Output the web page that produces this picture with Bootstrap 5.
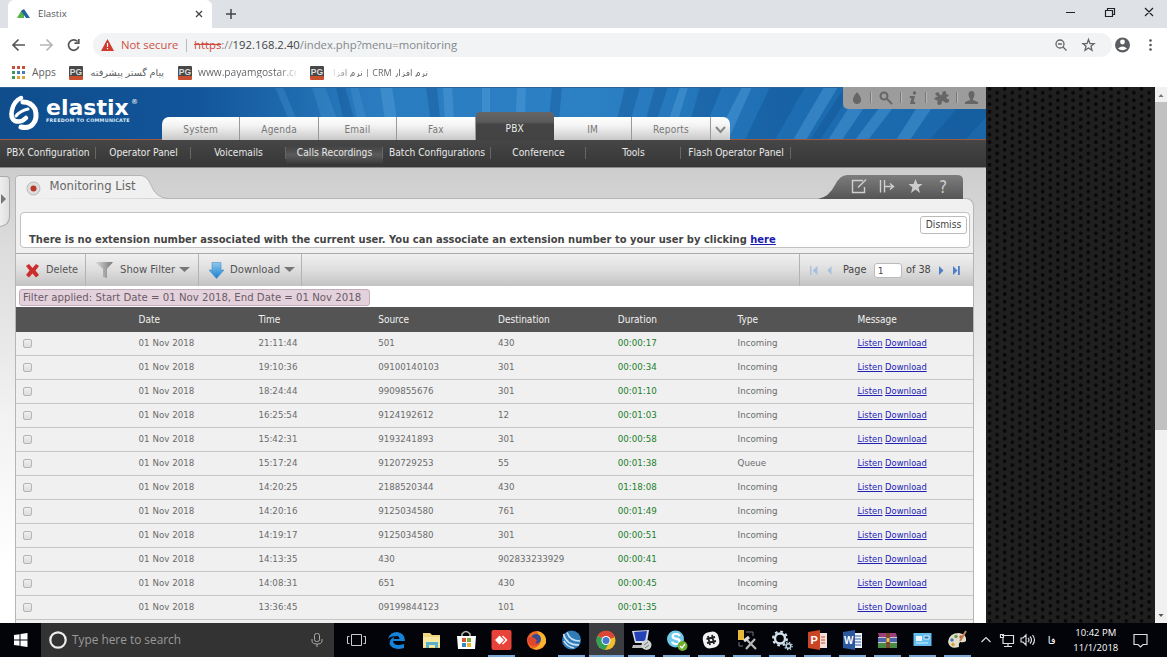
<!DOCTYPE html>
<html lang="en">
<head>
<meta charset="utf-8">
<title>Elastix</title>
<link href="https://cdn.jsdelivr.net/npm/bootstrap@5.3.0/dist/css/bootstrap.min.css" rel="stylesheet">
<style>
:root{--ui:"Open Sans","Noto Sans","DejaVu Sans",sans-serif;--app:"DejaVu Sans Condensed","DejaVu Sans",sans-serif;--wide:"DejaVu Sans",sans-serif}
html,body{height:100%;overflow:hidden}
body{font-family:var(--ui);font-size:11px;line-height:1;color:#444;background:#fff;white-space:nowrap}
svg{display:block;flex:none}
.desk{width:1167px;height:657px}
.tabstrip{height:28px;background:#dee1e6}
.btab{width:204px;margin-left:8px;background:#fff;border-radius:6px 6px 0 0;padding-left:9px;font-size:9.700px;color:#555}
.plus{margin-left:13px;margin-top:8px}
.toolbar{height:34px}
.omni{width:1019px;height:24px;border-radius:12px;background:#f1f3f4;font-size:11.320px;color:#85888c;padding-left:8px;margin-left:11px}
.insecure{color:#d05045;margin-left:7px;width:58px}
.bar{width:1px;height:13px;background:#bbb;margin:0 7px}
.marks{height:25px;font-size:10.200px;color:#5c5f63}
.pg{width:14px;height:14px;background:linear-gradient(#484848 72%,#c8502f 72%);color:#ddd;font:bold 8.5px/13px "Liberation Sans",sans-serif;text-align:center;border-radius:1px;flex:none}
.fade-r,.fade-l{-webkit-background-clip:text;background-clip:text;color:transparent}
.fade-r{width:98px;background-image:linear-gradient(90deg,#5c5f63 82%,#ddd)}
.fade-l{width:95px;background-image:linear-gradient(270deg,#5c5f63 78%,#ddd);font-size:9px}
.view{height:536px}
.page{width:986px;background:linear-gradient(#cdcdcd 80px,#dcdcdc 160px,#f2f2f2 330px,#fff 480px);font-family:var(--app)}
.hero{height:53px;background:#0f4f8f}
.hero-art{left:0;top:0}
.brandmark{left:6px;top:6px}
.brandname{left:46px;top:10px;color:#fff;font:bold 22px/22px "DejaVu Sans",sans-serif}
.brandtag{left:46px;top:31px;color:#dce9f7;font:bold 4.8px/6px "DejaVu Sans",sans-serif;letter-spacing:.3px}
.reg{left:131px;top:12px;color:#fff;font:7px/7px "DejaVu Sans",sans-serif}
.quick{right:0;top:0;width:143px;height:21.500px;background:#9c9c9c;border-radius:0 0 0 5px;padding:0 7px 0 8px}
.quick i{width:1px;height:11px;background:#777;box-shadow:1px 0 #b5b5b5}
.tabs{left:162px;bottom:0;height:28px}
.tabs>div{width:78.400px;height:23px;background:linear-gradient(#fff,#f2f2f2 40%,#c9c9c9);border-right:1px solid #999;color:#777;font-size:10px;line-height:25px;text-align:center;letter-spacing:.2px}
.tabs>.on{height:28px;background:linear-gradient(#666,#5a5a5a 35%,#444 45%,#434343);color:#eee;line-height:33px;border:0;border-radius:4px 4px 0 0}
.sub{height:28px;background:linear-gradient(#464646,#363636);border-bottom:1px solid #8a8a8a;color:#e8e8e8;font-size:10.200px;font-weight:500}
.sub>div{height:27px;line-height:25px;text-align:center;position:relative}
.sub>div::after{content:"";position:absolute;right:0;top:7px;width:1px;height:12px;background:#666}
.sub .hot{background:linear-gradient(transparent 20%,#5a5a5a 55%,transparent 90%)}
.handle{width:10px;height:51px;margin-top:8px;background:linear-gradient(90deg,#eee,#dedede);border:1px solid #aaa;border-left:0;border-radius:0 4px 10px 0;padding-top:17px}
.panel{width:958px;margin-left:5px;height:448px}
.ptop{height:31px}
.ptitle{left:34.500px;top:10px;font-size:12.900px;color:#666;line-height:16px}
.pbody{background:#f0f0f0;border-left:1px solid #b5b5b5;border-right:1px solid #b5b5b5;border-top:1px solid #b5b5b5;border-radius:0 8px 0 0;width:959px;height:425px;margin-top:-1px}
.notice{height:36px;margin:13px 3px 0 4px;background:#fff;border:1px solid #c2c2c2;border-radius:4px}
.notice b{left:8px;top:21px;font:bold 9.960px/12px "DejaVu Sans",sans-serif;color:#444}
.notice a{color:#1a1ab0}
.dis{right:2px;top:3px;width:47px;height:18px;border:1px solid #bbb;border-radius:3px;background:#fff;font-size:10.200px;line-height:16px;text-align:center;color:#444}
.acts{height:33px;margin-top:5px;background:linear-gradient(#f0f0f0,#dedede 50%,#c3c3c3);border-top:1px solid #aaa;font-size:11.200px;color:#555}
.acts .cellx{height:32px;border-right:1px solid #b3b3b3}
.pager{width:174px;border-left:1px solid #b3b3b3;font-size:10.800px;color:#444}
.pager span.box{width:28px;height:15px;background:#fff;border:1px solid #bbb;border-radius:3px;line-height:14px;padding-left:3px;font-size:9.500px}
.fline{height:21px;background:#fff}
.chip{margin-left:3px;margin-top:3px;height:17px;width:351px;border:1px solid #c3abb9;border-radius:3px;background:#e3d2dc;font-size:11.300px;line-height:15px;padding-left:3px;color:#6b5b66}
.grid>div{height:24px;border-bottom:1px solid #c6c6c6;font:8.700px/23px var(--wide);color:#6c6c6c}
.grid>div>span{flex:0 0 119.800px;position:relative;padding-left:2.800px}
.grid>div>span:first-child{padding-left:6.800px}
.grid>.head{height:25px;background:#545454;color:#f2f2f2;font:500 10px/25px var(--app);border:0}
.grid .dur{color:#1b7f2c}
.grid span.get{font:9.300px/21px var(--app);height:23px}
.grid a{color:#2222b4}
.cb{display:block;width:9px;height:9px;border:1px solid #b5b5b5;border-radius:2px;background:linear-gradient(#eee,#ddd)}
.mesh{width:169px}
.sbar{width:12px;background:#f1f1f1}
.thumb{height:328px;background:#c1c1c1}
.task{height:34px;background:#02040a;color:#fff}
.find{width:293px;background:#333;color:#9a9a9a;font-size:11.850px}
.tk{width:35.060px;height:34px;position:relative}
.run::after{content:"";position:absolute;left:4px;right:4px;bottom:0;height:2px;background:#7aa7d3}
.cur{background:#3c3d40}.cur::after{left:0;right:0}
.lang{margin-left:9px;width:18px;font-size:10px}
.clock{font-size:9.500px;line-height:15px;text-align:center;width:60px}
</style>
</head>
<body>
<div class="desk d-flex flex-column">
  <div class="tabstrip d-flex">
    <div class="btab d-flex align-items-center">
      <svg width="13" height="10"><path d="M0 9 4 2 7 1 7 9z" fill="#57b44a"/><path d="M4 2 7 0 13 9H9z" fill="#25639c"/></svg>
      <span class="ms-2">Elastix</span>
      <svg class="ms-auto me-2" width="10" height="10" stroke="#444" stroke-width="1.3"><path d="M2 2 8 8M8 2 2 8"/></svg>
    </div>
    <svg class="plus" width="12" height="12" stroke="#444" stroke-width="1.5"><path d="M6 1V11M1 6H11"/></svg>
    <svg class="ms-auto" width="110" height="28" fill="none" stroke="#222" stroke-width="1.200"><path d="M9 12.500H18M48.500 10.500H55.500V16.500H48.500zM50.500 10V8.500H57.500V14.500H56M88 8 96 16M96 8 88 16"/></svg>
  </div>
  <div class="toolbar d-flex align-items-center">
    <svg width="82" height="34" fill="none" stroke-width="1.700"><path stroke="#555" d="M13 17H25M18.500 11.500 13 17 18.500 22.500M77.500 13.500A5.200 5.200 0 1 0 78.700 18.500M78.800 11V15.200H74.500"/><path stroke="#b5b5b5" d="M40 17H52M46.500 11.500 52 17 46.500 22.500"/></svg>
    <div class="omni d-flex align-items-center">
      <svg width="13" height="12"><path d="M6.500 0 13 12H0z" fill="#cf3a2c"/><path d="M6.500 4V8M6.500 9V10.300" stroke="#fff" stroke-width="1.200"/></svg>
      <span class="insecure">Not secure</span>
      <span class="bar"></span>
      <span class="url"><s style="color:#cf4a3e">https</s>://<span style="color:#444">192.168.2.40</span>/index.php?menu=monitoring</span>
      <svg class="ms-auto" width="63" height="24" fill="none" stroke="#666" stroke-width="1.300"><circle cx="11" cy="11" r="4"/><path d="M14 14 17.500 17.500M9 11H13M39.500 6.500 41 10.600 45 10.700 42 13.200 43 17.300 39.500 15 36 17.300 37 13.200 34 10.700 38 10.600z"/></svg>
    </div>
    <svg width="50" height="34"><circle cx="10.500" cy="17" r="7.500" fill="#5a5d61"/><circle cx="10.500" cy="14" r="2.400" fill="#fff"/><path d="M6 20.500Q10.500 16.500 15 20.500 10.500 24 6 20.500" fill="#fff"/><g fill="#555"><circle cx="38.500" cy="12.500" r="1.300"/><circle cx="38.500" cy="17" r="1.300"/><circle cx="38.500" cy="21.500" r="1.300"/></g></svg>
  </div>
  <div class="marks d-flex align-items-center pb-1">
    <svg style="margin-left:12px" width="13" height="13"><g fill="#c9503c"><path d="M0 0h3v3H0zM5 0h3v3H5zM10 0h3v3h-3z"/></g><path d="M0 5h3v3H0zM0 10h3v3H0z" fill="#3f9a58"/><path d="M5 5h3v3H5zM10 5h3v3h-3z" fill="#497bb5"/><path d="M5 10h3v3H5zM10 10h3v3h-3z" fill="#e0a13a"/></svg>
    <span style="margin-left:7px;width:37px">Apps</span>
    <span class="pg">PG</span><span lang="fa" dir="rtl" style="width:89px;padding-right:14px;margin-left:6px;font-size:9.700px">پیام گستر پیشرفته</span>
    <span class="pg">PG</span><span class="fade-r" style="margin-left:6px">www.payamgostar.co</span>
    <span class="pg" style="margin-left:14px">PG</span><span class="fade-l" dir="rtl" lang="fa" style="margin-left:9px">نرم افزار CRM | نرم افزا</span>
  </div>
  <div class="view d-flex">
    <div class="page">
      <header class="hero position-relative">
        <svg class="hero-art position-absolute" width="986" height="53">
          <defs><linearGradient id="sky"><stop offset="0" stop-color="#0f4d8c"/><stop offset=".2" stop-color="#12559a"/><stop offset=".38" stop-color="#2a7cc0"/><stop offset=".6" stop-color="#2c80c4"/><stop offset=".8" stop-color="#1d6db2"/><stop offset="1" stop-color="#1a67aa"/></linearGradient></defs>
          <path fill="url(#sky)" d="M0 0H986V53H0z"/>
          <g fill="#5aa6e0" opacity=".38"><path opacity=".6" d="M275 0H283L305 53H297zM312 0H325L345 53H328zM350 0H358L372 53H362z"/><path d="M380 0H392L400 53H388zM443 0H452L455 53H446zM482 0H490V53H482zM517 0H526L524 53H515z"/><path d="M680 0H688L672 53H662zM742 0H752L728 53H715zM824 0H838L806 53H793zM862 0H878L842 53H828zM895 0H909L868 53H855zM930 0H946L910 53H896z"/></g>
          <g fill="#0c4c8a" opacity=".32"><path d="M336 0H345L360 53H348zM426 0H437L442 53H433zM552 0H562L557 53H547zM625 0H640L625 53H612zM655 0H668L650 53H640zM700 0H722L700 53H685zM770 0H805L775 53H745zM845 0H855L820 53H810zM975 0H986V30L965 53H930z"/></g>
          <path d="M0 52.500H986" stroke="#a05a42" stroke-width="1"/><path d="M0 .5H986" stroke="#2e6494"/>
        </svg>
        <svg class="brandmark position-absolute" width="36" height="42" fill="none" stroke="#fff" stroke-linecap="round"><path stroke-width="5" d="M17 9Q25 9 29 16 32 25 27 31 23 36 15 34"/><path stroke-width="4.500" d="M15 5Q8 8 6 17 4 25 9 28 15 30 20 25"/><path stroke-width="3" d="M10 23Q14 18 22 16"/></svg>
        <span class="brandname position-absolute">elastix</span><span class="reg position-absolute">®</span>
        <span class="brandtag position-absolute">FREEDOM TO COMMUNICATE</span>
        <div class="quick position-absolute d-flex align-items-center justify-content-between">
          <svg width="12" height="14" fill="#666"><path d="M6 1Q11 7 10 10 9 13 6 13 3 13 2 10 1 7 6 1"/></svg><i></i>
          <svg width="14" height="14" fill="none" stroke="#666" stroke-width="2"><circle cx="5" cy="5" r="3.500"/><path d="M8 8 13 13"/></svg><i></i>
          <svg width="10" height="14" fill="#666"><circle cx="6.500" cy="2" r="1.700"/><path d="M2 5H7L5.500 11H7.500L7 13H2L3.500 7H1.500z"/></svg><i></i>
          <svg width="15" height="14" fill="#666"><path d="M1 3Q3 0 5 2L6 4 8 4Q8 0 11 0 13 1 12 3L15 4 12 7Q14 9 15 8 16 12 12 12L9 10 8 10Q8 14 5 14 2 13 4 10L0 8 2 6 4 6z"/></svg><i></i>
          <svg width="15" height="14" fill="#666"><path d="M7.500 0Q10.500 0 10.500 3.500 10.500 6 9 7.500V9L14 11V13H1V11L6 9V7.500Q4.500 6 4.500 3.500 4.500 0 7.500 0"/></svg>
        </div>
        <nav class="tabs position-absolute d-flex align-items-end">
          <div style="border-radius:7px 0 0 0">System</div><div>Agenda</div><div>Email</div><div>Fax</div><div class="on">PBX</div><div>IM</div><div>Reports</div>
          <div style="width:19px;border:0;border-radius:0 7px 0 0"><svg width="19" height="23" fill="none" stroke="#888" stroke-width="2"><path d="M5 10 9.500 15 14 10"/></svg></div>
        </nav>
      </header>
      <nav class="sub d-flex">
        <div style="width:96px">PBX Configuration</div><div style="width:95px">Operator Panel</div><div style="width:95px">Voicemails</div><div class="hot" style="width:97px">Calls Recordings</div><div style="width:108px">Batch Configurations</div><div style="width:95px">Conference</div><div style="width:95px">Tools</div><div style="width:110px">Flash Operator Panel</div>
      </nav>
      <main class="d-flex">
        <div class="handle"><svg width="8" height="10" fill="#777"><path d="M1 0 6 5 1 10z"/></svg></div>
        <section class="panel">
          <div class="ptop position-relative">
            <svg width="959" height="31"><defs><linearGradient id="dk" x2="0" y2="1"><stop stop-color="#7d7d7d"/><stop offset="1" stop-color="#555"/></linearGradient></defs><path d="M.5 31V11Q.5 7.500 5 7.500H126Q132 8 136 17 141 30.500 154 30.500" fill="#f0f0f0" stroke="#b5b5b5"/><path d="M803 31Q814 29 820 17 825 7 832 7H942Q948 7 948 12V31z" fill="url(#dk)"/>
            <g fill="none" stroke="#cfcfcf" stroke-width="1.400"><path d="M848 12.500H837.500V24.500H849.500V19M843 19.500 851 11.500M865.500 12V24.500M869.500 12V24.500M870 18.500H878M875 15.500 878.500 18.500 875 21.500"/></g><path d="M900.500 11 902.500 16H907.500L903.500 19.500 905 25 900.500 21.500 896 25 897.500 19.500 893.500 16H898.500z" fill="#ccc"/><text x="924" y="24.500" font-size="17" fill="#ccc" font-family="DejaVu Sans Condensed">?</text>
            <circle cx="18.500" cy="20.500" r="6.500" fill="#ddd" stroke="#bbb"/><circle cx="18.500" cy="20.500" r="3" fill="#b8382a"/></svg>
            <span class="ptitle position-absolute">Monitoring List</span>
          </div>
          <div class="pbody">
            <div class="notice position-relative"><b class="position-absolute">There is no extension number associated with the current user. You can associate an extension number to your user by clicking <a href="#">here</a></b><span class="dis position-absolute">Dismiss</span></div>
            <div class="acts d-flex align-items-center">
              <div class="cellx d-flex align-items-center" style="width:70px;padding-left:9px"><svg width="15" height="15"><path d="M1 3 4 1 7.500 5 11 1 14 3 10.500 7.500 14 12 11 14.500 7.500 10.500 4 14.500 1 12 4.500 7.500z" fill="#cc2e2e"/></svg><span style="margin-left:6px;font-size:10.800px">Delete</span></div>
              <div class="cellx d-flex align-items-center" style="width:113px;padding-left:9px"><svg width="19" height="18"><defs><linearGradient id="fu"><stop stop-color="#ddd"/><stop offset="1" stop-color="#777"/></linearGradient></defs><path d="M0 1H18L12 8V17L8 16V8z" fill="url(#fu)"/></svg><span style="margin-left:6px">Show Filter</span><svg class="ms-1" width="11" height="6" fill="#777"><path d="M0 0H11L5.500 5z"/></svg></div>
              <div class="cellx d-flex align-items-center" style="width:103px;padding-left:10px"><svg width="15" height="17"><defs><linearGradient id="dn" x2="0" y2="1"><stop stop-color="#8fc8ee"/><stop offset="1" stop-color="#147fd0"/></linearGradient></defs><path d="M3 .5H12V8H15L7.500 16.500 0 8H3z" fill="url(#dn)" stroke="#4a90c4" stroke-width=".6"/></svg><span style="margin-left:6px">Download</span><svg class="ms-1" width="11" height="6" fill="#777"><path d="M0 0H11L5.500 5z"/></svg></div>
              <div class="pager d-flex align-items-center h-100 ms-auto"><svg width="43" height="12" fill="#a9bfe0"><path d="M10 2h1.500v9H10zM17.500 2V11L12.500 6.500zM31.500 2V11L27.500 6.500z"/></svg><span style="width:31px">Page</span><span class="box">1</span><span style="margin-left:4px;width:30px">of 38</span><svg width="26" height="12" fill="#4d80c9"><path d="M3 2 7.500 6.500 3 11zM17 2 21.500 6.500 17 11zM22 2H23.800V11H22z"/></svg></div>
            </div>
            <div class="fline d-flex"><div class="chip">Filter applied: Start Date = 01 Nov 2018, End Date = 01 Nov 2018</div></div>
            <div class="grid" id="grid"><div class="head d-flex"><span></span><span>Date</span><span>Time</span><span>Source</span><span>Destination</span><span>Duration</span><span>Type</span><span>Message</span></div></div>
          </div>
        </section>
      </main>
    </div>
    <svg class="mesh" width="169" height="536"><defs><pattern id="holes" width="15.200" height="7.600" patternUnits="userSpaceOnUse"><path fill="#1f1f1f" d="M0 0h16v8H0z"/><g fill="#070707"><circle cx="3.500" cy="2" r="1.900"/><circle cx="11.100" cy="5.600" r="1.900"/></g></pattern></defs><path fill="url(#holes)" d="M0 0H169V536H0z"/></svg>
    <div class="sbar d-flex flex-column"><svg width="12" height="15"><path d="M3.500 10 6 7 8.500 10z" fill="#777"/></svg><div class="thumb"></div><svg class="mt-auto" width="12" height="15"><path d="M3.500 6 6 9 8.500 6z" fill="#555"/></svg></div>
  </div>
  <footer class="task d-flex align-items-center">
    <svg width="41" height="34" fill="#fff"><path d="M14 12 19.500 11.200V16.500H14zM20.500 11 27.500 10V16.500H20.500zM14 17.500H19.500V22.800L14 22zM20.500 17.500H27.500V24L20.500 23z"/></svg>
    <div class="find h-100 d-flex align-items-center"><svg width="31" height="34"><circle cx="17" cy="17" r="7.700" fill="none" stroke="#eee" stroke-width="2.200"/></svg><span>Type here to search</span><svg class="ms-auto me-2" width="18" height="34" fill="none" stroke="#aaa"><rect x="6.500" y="10.500" width="5" height="8" rx="2"/><path d="M4 16V18Q4 21 9 21 14 21 14 18V16M9 21V24"/></svg></div>
    <svg width="45" height="34" fill="none" stroke="#ccc"><path d="M17.500 11.500H27.500V22.500H17.500zM15.500 13.500H13.500V20.500H15.500M29.500 13.500H31.500V20.500H29.500"/></svg>
    <div class="tk"><svg width="35" height="34"><path d="M9 16Q11 9 18 9 26 10 26 18H14Q15 24 25 21V25Q14 28 10.500 21 10 15 18 13 11 13 9 16M14.500 16H20.500Q20 13 18 13 15 13 14.500 16" fill="#1683d8" fill-rule="evenodd"/></svg></div>
    <div class="tk"><svg width="35" height="34"><path d="M9 10H16L18 12H26V25H9z" fill="#efd77e"/><path d="M9 14H26V24H9z" fill="#f8e79e"/><path d="M12 25V19H24V25H21V22H15V25z" fill="#58b2c9"/></svg></div>
    <div class="tk"><svg width="35" height="34"><path d="M13 13V11Q17 6 21 11V13" fill="none" stroke="#bbb" stroke-width="1.500"/><path d="M8 13H27L26 26H9z" fill="#fff"/><path fill="#db5131" d="M13 15h4v4h-4z"/><path fill="#76a83a" d="M18 15h4v4h-4z"/><path fill="#318ac6" d="M13 20h4v4h-4z"/><path fill="#edb52e" d="M18 20h4v4h-4z"/></svg></div>
    <div class="tk run"><svg width="35" height="34"><rect x="7.500" y="7" width="20" height="20" rx="2" fill="#e84338"/><path d="M15.500 12.500 20 17 15.500 21.500 11 17zM19 12.500 23.500 17 19 21.500 18 20.500 21.500 17 18 13.500z" fill="#fff"/></svg></div>
    <div class="tk"><svg width="35" height="34"><circle cx="17.500" cy="17.500" r="9.500" fill="#ef6826"/><path d="M18 8Q28 10 27 20 22 28 14 26 24 22 21 14z" fill="#f9b62c"/><circle cx="17" cy="16" r="5" fill="#354b94"/><path d="M8 15Q15 12 18 18 14 21 21 21 15 25 10 21z" fill="#e2472e"/></svg></div>
    <div class="tk run"><svg width="35" height="34"><circle cx="17.500" cy="17" r="9.500" fill="#317cb8"/><path d="M9.500 11Q12 22 25 22M13 9.500Q16 18 26 18M10 18Q13 24 20 25" fill="none" stroke="#c8e1f3" stroke-width="1.600"/></svg></div>
    <div class="tk run cur"><svg width="35" height="34"><circle cx="17" cy="17.500" r="9.500" fill="#f2bd2b"/><path d="M17 17.500 8.800 12.700A9.500 9.500 0 0 1 26 14z" fill="#dc4636"/><path d="M17 17.500 8.800 12.700A9.500 9.500 0 0 0 16 27L20 20z" fill="#32a056"/><circle cx="17" cy="17.500" r="4.500" fill="#fff"/><circle cx="17" cy="17.500" r="3.500" fill="#4479cf"/></svg></div>
    <div class="tk run"><svg width="35" height="34"><path d="M8 8 25 7 23 20 11 20z" fill="#d5dbea"/><path d="M10 9 23 8 21 18 12 18z" fill="#2543b8"/><path d="M9 22H20L19 25H8z" fill="#bbb"/><circle cx="22.500" cy="22" r="5" fill="#cfd5d0"/><path d="M20 22 24 19M21 25 25 22" stroke="#777"/></svg></div>
    <div class="tk run"><svg width="35" height="34"><circle cx="16.500" cy="16" r="8.500" fill="#6fc9e8"/><text x="11.500" y="22" font-size="16" font-weight="bold" fill="#fff" font-family="Liberation Sans">S</text><circle cx="23.500" cy="23" r="5" fill="#6fae30"/><path d="M21 23 23 25 26 21" stroke="#fff" fill="none" stroke-width="1.300"/></svg></div>
    <div class="tk run"><svg width="35" height="34"><rect x="9" y="9" width="16" height="16" rx="6" fill="#f2f2f2" transform="rotate(-12 17 17)"/><path d="M14 13 16 22M18 12 20 21M12.500 16 21 14M13 20 22 18" stroke="#222" stroke-width="1.800"/></svg></div>
    <div class="tk run"><svg width="35" height="34"><path d="M9 7h6v10H9z" fill="#e8b938"/><path d="M17 9H24V13M10 19V23H14" fill="none" stroke="#777"/><path d="M17 26 26 16M17 16 27 26" stroke="#b8b8b8" stroke-width="2.200"/><path d="M15 18 20 14" stroke="#ddd" stroke-width="3"/></svg></div>
    <div class="tk run"><svg width="35" height="34" fill="none"><circle cx="15" cy="15.500" r="5" stroke="#d4e1ec" stroke-width="2.400"/><circle cx="15" cy="15.500" r="7" stroke="#d4e1ec" stroke-width="2" stroke-dasharray="2.700 2.800"/><circle cx="23.500" cy="23" r="2.300" stroke="#b9cfe0" stroke-width="1.600"/><circle cx="23.500" cy="23" r="3.700" stroke="#b9cfe0" stroke-width="1.300" stroke-dasharray="1.400 1.500"/></svg></div>
    <div class="tk run"><svg width="35" height="34"><path d="M18 10H27V25H18z" fill="#f6dfd8"/><path d="M21 14H25M21 17H25M21 20H25" stroke="#cb4a2b"/><path d="M8 9 20 7V27L8 25z" fill="#cb4426"/><text x="10.500" y="21" font-size="11" font-weight="bold" fill="#fff" font-family="Liberation Sans">P</text></svg></div>
    <div class="tk run"><svg width="35" height="34"><path d="M18 10H27V25H18z" fill="#eef3fa"/><path d="M20 13H26M20 16H26M20 19H26M20 22H26" stroke="#2f5da2"/><path d="M8 9 20 7V27L8 25z" fill="#2c58a0"/><text x="9" y="21" font-size="10" font-weight="bold" fill="#fff" font-family="Liberation Sans">W</text></svg></div>
    <div class="tk run"><svg width="35" height="34"><path d="M8 10H26L27 14H9z" fill="#9d3f77"/><path d="M8 15H27V19H8z" fill="#4b64ad"/><path d="M8 20H27V25H8z" fill="#4a8c46"/><path d="M8 14.500H27M8 19.500H27" stroke="#ccc"/><path d="M16 10H20V25H16z" fill="#7d4932"/><path d="M16.500 15h3v4h-3z" fill="#e1c15e"/></svg></div>
    <div class="tk run"><svg width="35" height="34"><rect x="8.500" y="10" width="18" height="13" fill="#62bdec"/><path d="M11 13h6v5h-6z" fill="#e9f6fd"/><path d="M19 13h5v3h-5zM11 20h12" fill="#2a6ea7" stroke="#d5eefb"/></svg></div>
    <div class="tk run"><svg width="35" height="34"><path d="M8 19Q9 10 19 10 27 11 26 18 24 20 20 19 18 21 19 24 10 27 8 19" fill="#e3dccb"/><circle cx="12" cy="17" r="1.700" fill="#4873b4"/><circle cx="16" cy="13.500" r="1.700" fill="#58a04c"/><circle cx="21" cy="14" r="1.700" fill="#d14d3a"/><circle cx="13" cy="21.500" r="1.700" fill="#d5a12f"/><path d="M20 18 26 8" stroke="#b98250" stroke-width="2"/></svg></div>
    <svg width="64" height="34" fill="none" stroke="#ddd" stroke-width="1.200"><path d="M6.500 19 11 14.500 15.500 19M27 12.500H38.500V20.500H28V15M33 21V23.500M29 23.500H37M25.500 11.500H28.500V14.500H25.500zM46 15H48L51 12V22L48 19H46zM53 15Q55 17 53 19M55 13.500Q58 17 55 20.500M57.500 12Q61.500 17 57.500 22"/></svg>
    <span lang="fa" class="lang">فا</span>
    <div class="clock">10:42 PM<br>11/1/2018</div>
    <svg width="36" height="34" fill="none" stroke="#ddd" stroke-width="1.200"><path d="M8 11.500H21V21.500H17L14.500 24 12 21.500H8z"/></svg>
  </footer>
</div>
<script src="https://cdn.jsdelivr.net/npm/bootstrap@5.3.0/dist/js/bootstrap.bundle.min.js"></script>
<script>
const calls = [
  ['21:11:44','501','430','00:00:17'],['19:10:36','09100140103','301','00:00:34'],
  ['18:24:44','9909855676','301','00:01:10'],['16:25:54','9124192612','12','00:01:03'],
  ['15:42:31','9193241893','301','00:00:58'],['15:17:24','9120729253','55','00:01:38','Queue'],
  ['14:20:25','2188520344','430','01:18:08'],['14:20:16','9125034580','761','00:01:49'],
  ['14:19:17','9125034580','301','00:00:51'],['14:13:35','430','902833233929','00:00:41'],
  ['14:08:31','651','430','00:00:45'],['13:36:45','09199844123','101','00:01:35']];
document.getElementById('grid').insertAdjacentHTML('beforeend', calls.map(c =>
  `<div class="d-flex align-items-center"><span><i class="cb"></i></span><span>01 Nov 2018</span><span>${c[0]}</span><span>${c[1]}</span><span>${c[2]}</span><span class="dur">${c[3]}</span><span>${c[4] || 'Incoming'}</span><span class="get"><a href="#">Listen</a> <a href="#">Download</a></span></div>`).join(''));
</script>
</body>
</html>
